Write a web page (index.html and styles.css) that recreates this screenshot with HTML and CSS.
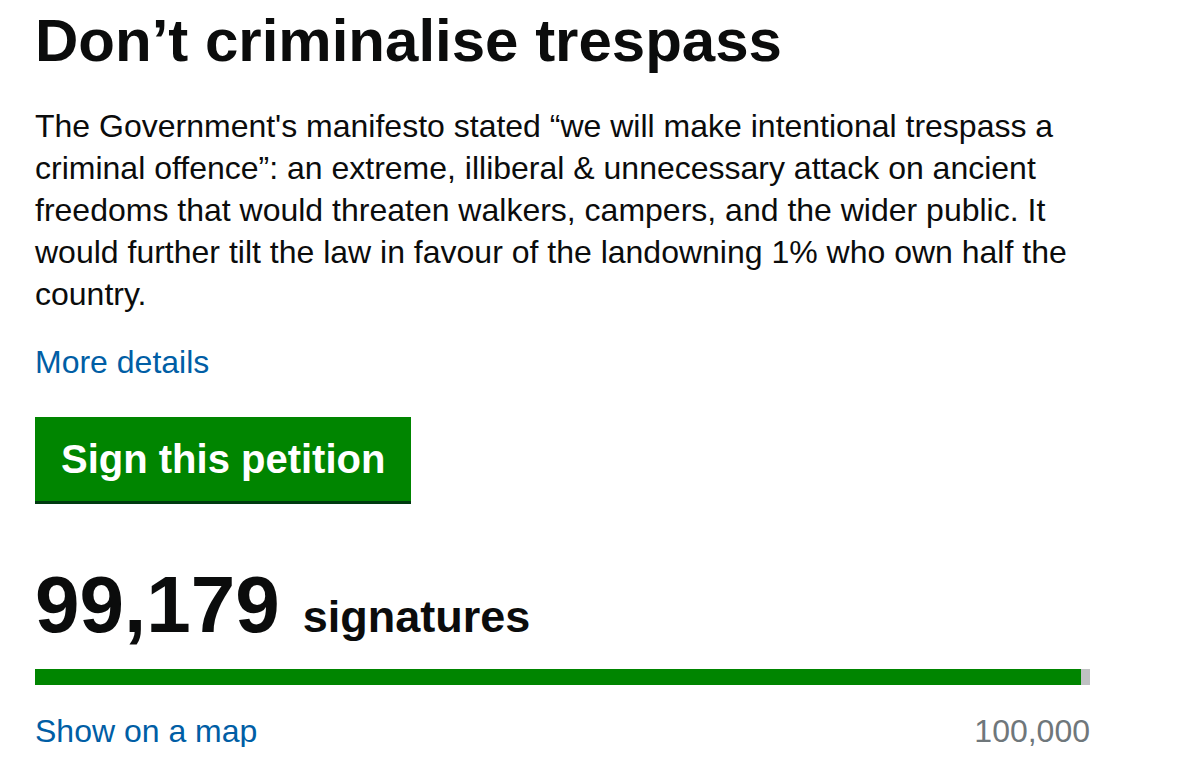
FILE: index.html
```html
<!DOCTYPE html>
<html lang="en">
<head>
<meta charset="utf-8">
<title>Don’t criminalise trespass</title>
<link rel="stylesheet" href="styles.css">
</head>
<body>
<main class="petition">
  <h1 class="title">Don’t criminalise trespass</h1>
  <p class="summary">The Government's manifesto stated “we will make intentional trespass a criminal offence”: an extreme, illiberal &amp; unnecessary attack on ancient freedoms that would threaten walkers, campers, and the wider public. It would further tilt the law in favour of the landowning 1% who own half the country.</p>
  <p class="more"><a href="#" class="link">More details</a></p>
  <a href="#" class="button">Sign this petition</a>
  <div class="count"><span class="count-number">99,179</span><span class="count-label">signatures</span></div>
  <div class="progress"><div class="progress-fill" style="width:99.18%"></div></div>
  <div class="progress-meta">
    <a href="#" class="link">Show on a map</a>
    <span class="threshold">100,000</span>
  </div>
</main>
</body>
</html>
```

FILE: styles.css
```css
html, body {
  margin: 0;
  padding: 0;
  background: #ffffff;
}
body {
  font-family: "Liberation Sans", Arial, sans-serif;
  color: #0b0c0c;
}
.petition {
  display: flex;
  flex-direction: column;
  align-items: flex-start;
  width: 1055px;
  padding: 8px 0 0 35px;
}
.title {
  font-size: 60px;
  line-height: 66px;
  font-weight: 700;
  margin: 0;
}
.summary {
  font-size: 32px;
  line-height: 42px;
  margin: 31px 0 0 0;
}
.more {
  font-size: 32px;
  line-height: 42px;
  margin: 26px 0 0 0;
}
.link {
  color: #005ea5;
  text-decoration: none;
}
.button {
  display: block;
  margin-top: 34px;
  background: #008500;
  color: #ffffff;
  font-size: 40px;
  font-weight: 700;
  line-height: 44px;
  padding: 20px 26px;
  box-shadow: 0 3px 0 #003a10;
  text-decoration: none;
}
.count {
  display: flex;
  align-items: baseline;
  gap: 23px;
  margin-top: 64px;
  line-height: 1;
  font-weight: 700;
}
.count-number {
  font-size: 80px;
}
.count-label {
  font-size: 45px;
}
.progress {
  align-self: stretch;
  margin-top: 24px;
  height: 16px;
  background: #bfc1c3;
}
.progress-fill {
  height: 100%;
  background: #008500;
}
.progress-meta {
  align-self: stretch;
  display: flex;
  justify-content: space-between;
  align-items: baseline;
  font-size: 32px;
  line-height: 32px;
  margin-top: 30px;
}
.threshold {
  color: #6f777b;
}
```
